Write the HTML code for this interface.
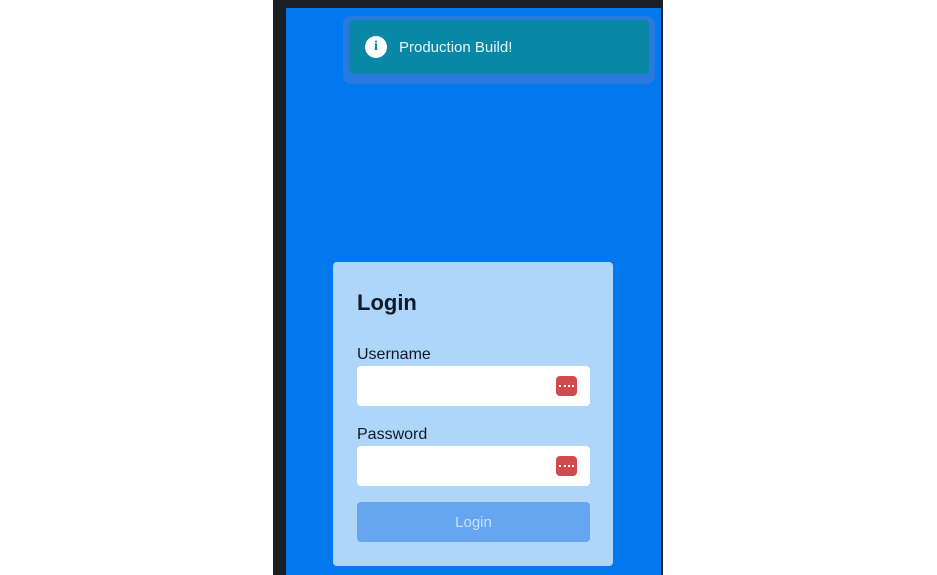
<!DOCTYPE html>
<html><head><style>
*{margin:0;padding:0;box-sizing:border-box}
body{width:937px;height:575px;background:#fff;position:relative;overflow:hidden;font-family:"Liberation Sans",sans-serif}
.frame{position:absolute;left:273px;top:0;width:390px;height:575px;background:#1b1e24}
.blue{position:absolute;left:286px;top:8px;width:375px;height:567px;background:#0278ee}
.toastw{position:absolute;left:343px;top:16px;width:312px;height:68px;background:#2a79df;border-radius:8px}
.toast{position:absolute;left:349px;top:20px;width:300px;height:54px;background:#0988a5;border-radius:5px}
.ic{position:absolute;left:365px;top:36px;width:22px;height:22px;border-radius:50%;background:#fff;color:#0988a5;font:bold 14px "Liberation Serif",serif;text-align:center;line-height:22px}
.tt{position:absolute;left:399px;top:39px;color:#e8f4ff;font-size:15px}
.card{position:absolute;left:333px;top:262px;width:280px;height:304px;background:#afd5f8;border-radius:4px}
.h{position:absolute;left:357px;top:290px;font-size:22px;font-weight:bold;color:#111a27}
.lb{position:absolute;left:357px;font-size:16px;color:#0e1a2a}
.in{position:absolute;left:357px;width:233px;height:40px;background:#fff;border-radius:4px}
.rk{position:absolute;left:556px;width:21px;height:20px;background:#d14a4d;border-radius:4px}
.rk:after{content:"";position:absolute;left:3px;top:9px;width:15px;border-top:2px dotted #fff}
.btn{position:absolute;left:357px;top:502px;width:233px;height:40px;background:#66a6f0;border-radius:4px;color:#c6e0fb;font-size:15px;text-align:center;line-height:42px}
</style></head><body>
<div class="frame"></div><div class="blue"></div>
<div class="toastw"></div><div class="toast"></div>
<div class="ic">i</div><div class="tt">Production Build!</div>
<div class="card"></div>
<div class="h">Login</div>
<div class="lb" style="top:346px">Username</div>
<div class="in" style="top:366px"></div><div class="rk" style="top:376px"></div>
<div class="lb" style="top:426px">Password</div>
<div class="in" style="top:446px"></div><div class="rk" style="top:456px"></div>
<div class="btn">Login</div>
</body></html>
